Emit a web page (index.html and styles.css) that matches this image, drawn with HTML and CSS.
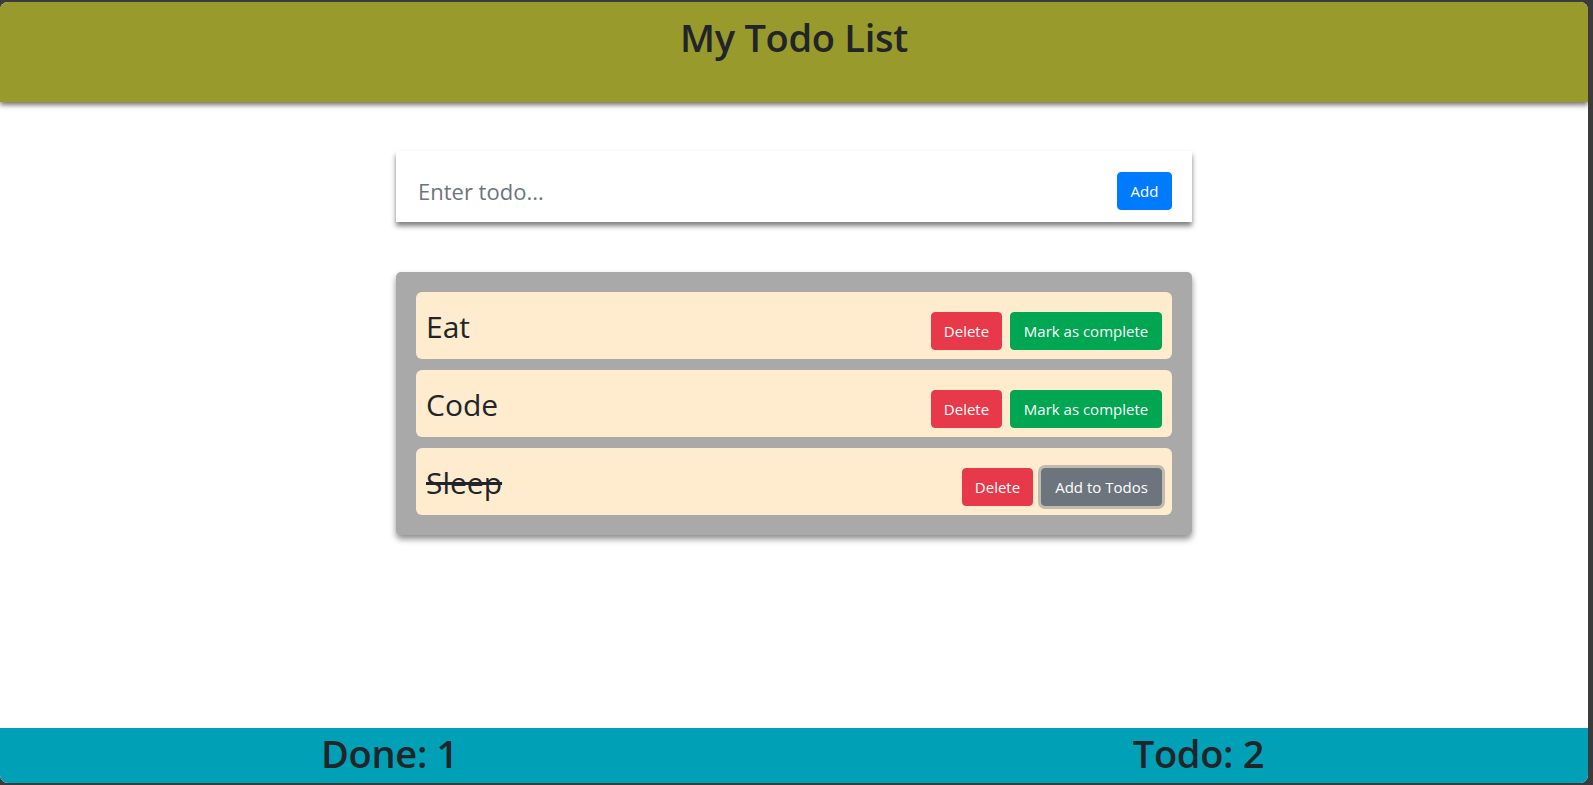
FILE: index.html
```html
<!DOCTYPE html>
<html lang="en">
<head>
<meta charset="utf-8">
<title>My Todo List</title>
<link rel="stylesheet" href="styles.css">
</head>
<body>
<div class="window">
  <header class="app-header">
    <h1 class="app-title">My Todo List</h1>
  </header>
  <main class="app-main">
    <form class="todo-form">
      <input class="todo-input" type="text" placeholder="Enter todo...">
      <button class="btn btn-primary" type="button">Add</button>
    </form>
    <ul class="todo-list">
      <li class="todo-item">
        <h2 class="todo-text">Eat</h2>
        <div class="todo-actions">
          <button class="btn btn-danger" type="button">Delete</button>
          <button class="btn btn-success" type="button">Mark as complete</button>
        </div>
      </li>
      <li class="todo-item">
        <h2 class="todo-text">Code</h2>
        <div class="todo-actions">
          <button class="btn btn-danger" type="button">Delete</button>
          <button class="btn btn-success" type="button">Mark as complete</button>
        </div>
      </li>
      <li class="todo-item">
        <h2 class="todo-text is-done">Sleep</h2>
        <div class="todo-actions">
          <button class="btn btn-danger" type="button">Delete</button>
          <button class="btn btn-secondary is-focused" type="button">Add to Todos</button>
        </div>
      </li>
    </ul>
  </main>
  <footer class="app-footer">
    <div class="footer-row">
      <h1 class="footer-stat">Done: 1</h1>
      <h1 class="footer-stat">Todo: 2</h1>
    </div>
  </footer>
</div>
</body>
</html>
```

FILE: styles.css
```css
* { box-sizing: border-box; }

html, body {
  margin: 0;
  padding: 0;
  height: 100%;
}

body {
  background: #3b3b3b;
  font-family: "Open Sans", "Noto Sans", "Liberation Sans", sans-serif;
  color: #212529;
  overflow: hidden;
}

.window {
  margin: 2px 5px 2px 0;
  height: 781px;
  background: #ffffff;
  border-radius: 8px;
  overflow: hidden;
  display: flex;
  flex-direction: column;
}

.app-header {
  position: relative;
  z-index: 1;
  height: 100px;
  background: #989a2b;
  padding-top: 11px;
  box-shadow: 0 3px 5px rgba(0, 0, 0, 0.55);
  text-align: center;
}

.app-title {
  margin: 0;
  font-size: 38px;
  line-height: 48px;
  font-weight: 600;
  letter-spacing: -0.3px;
}

.app-main {
  flex: 1;
  padding-top: 49px;
}

.todo-form {
  width: 796px;
  height: 71px;
  margin: 0 auto;
  padding: 21px 20px 12px 10px;
  display: flex;
  align-items: flex-start;
  background: #fff;
  box-shadow: 0 4px 5px rgba(0, 0, 0, 0.5);
}

.todo-input {
  flex: 1;
  height: 38px;
  border: none;
  outline: none;
  padding: 0 12px;
  font-family: inherit;
  font-size: 22px;
  color: #495057;
  background: transparent;
}

.todo-input::placeholder {
  color: #6c757d;
}

.btn {
  font-family: inherit;
  font-size: 15px;
  line-height: 24px;
  height: 38px;
  padding: 6px 12px;
  border: 1px solid transparent;
  border-radius: 4px;
  color: #fff;
  white-space: nowrap;
  cursor: pointer;
}

.btn-primary { background: #007bff; border-color: #007bff; width: 55px; padding: 6px 0; }
.btn-danger { background: #e8394a; border-color: #e8394a; width: 71px; padding: 6px 0; }
.btn-success { background: #00a651; border-color: #00a651; width: 152px; padding: 6px 0; }
.btn-secondary { background: #6c757d; border-color: #6c757d; width: 121px; padding: 6px 0; }
.is-focused { box-shadow: 0 0 0 3px #c0baaf; }

.todo-list {
  list-style: none;
  width: 796px;
  margin: 50px auto 0;
  padding: 20px;
  background: #a9a9a9;
  border-radius: 5px;
  box-shadow: 0 4px 6px rgba(0, 0, 0, 0.45);
  display: flex;
  flex-direction: column;
  gap: 11px;
}

.todo-item {
  display: flex;
  align-items: flex-start;
  justify-content: space-between;
  height: 67px;
  padding: 16px 10px 9px 10px;
  background: #ffebcd;
  border-radius: 6px;
}

.todo-text {
  margin: 0;
  font-size: 30px;
  font-weight: 400;
  line-height: 38px;
}

.todo-text.is-done {
  text-decoration: line-through;
}

.todo-actions {
  margin-top: 4px;
  display: flex;
  gap: 8px;
}

.app-footer {
  height: 55px;
  background: #00a0b7;
  padding-top: 1px;
}

.footer-row {
  display: grid;
  grid-template-columns: 1fr 1fr;
  margin: 0 -15px;
}

.footer-stat {
  margin: 0;
  text-align: center;
  font-size: 38px;
  line-height: 48px;
  font-weight: 600;
  letter-spacing: -0.3px;
}
```
